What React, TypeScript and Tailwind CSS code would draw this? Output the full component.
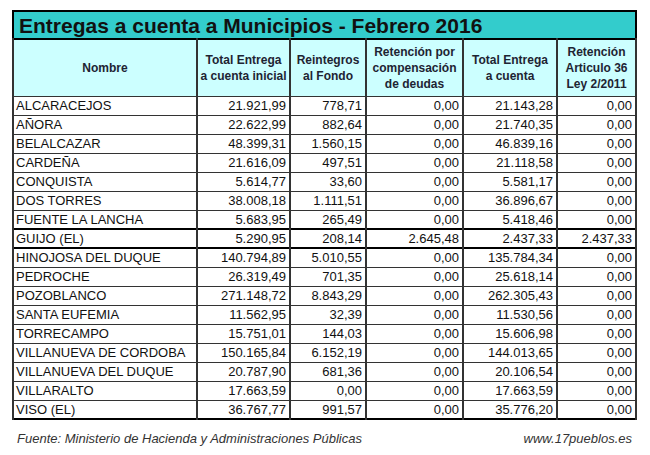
const rows: [string, string, string, string, string, string][] = [
  ['ALCARACEJOS', '21.921,99', '778,71', '0,00', '21.143,28', '0,00'],
  ['AÑORA', '22.622,99', '882,64', '0,00', '21.740,35', '0,00'],
  ['BELALCAZAR', '48.399,31', '1.560,15', '0,00', '46.839,16', '0,00'],
  ['CARDEÑA', '21.616,09', '497,51', '0,00', '21.118,58', '0,00'],
  ['CONQUISTA', '5.614,77', '33,60', '0,00', '5.581,17', '0,00'],
  ['DOS TORRES', '38.008,18', '1.111,51', '0,00', '36.896,67', '0,00'],
  ['FUENTE LA LANCHA', '5.683,95', '265,49', '0,00', '5.418,46', '0,00'],
  ['GUIJO (EL)', '5.290,95', '208,14', '2.645,48', '2.437,33', '2.437,33'],
  ['HINOJOSA DEL DUQUE', '140.794,89', '5.010,55', '0,00', '135.784,34', '0,00'],
  ['PEDROCHE', '26.319,49', '701,35', '0,00', '25.618,14', '0,00'],
  ['POZOBLANCO', '271.148,72', '8.843,29', '0,00', '262.305,43', '0,00'],
  ['SANTA EUFEMIA', '11.562,95', '32,39', '0,00', '11.530,56', '0,00'],
  ['TORRECAMPO', '15.751,01', '144,03', '0,00', '15.606,98', '0,00'],
  ['VILLANUEVA DE CORDOBA', '150.165,84', '6.152,19', '0,00', '144.013,65', '0,00'],
  ['VILLANUEVA DEL DUQUE', '20.787,90', '681,36', '0,00', '20.106,54', '0,00'],
  ['VILLARALTO', '17.663,59', '0,00', '0,00', '17.663,59', '0,00'],
  ['VISO (EL)', '36.767,77', '991,57', '0,00', '35.776,20', '0,00'],
];

const headers = [
  ['Nombre'],
  ['Total Entrega', 'a cuenta inicial'],
  ['Reintegros', 'al Fondo'],
  ['Retención por', 'compensación', 'de deudas'],
  ['Total Entrega', 'a cuenta'],
  ['Retención', 'Articulo 36', 'Ley 2/2011'],
];

const widths = ['w-[184px]', 'w-[93px]', 'w-[76px]', 'w-[97px]', 'w-[94px]', 'w-[79px]'];

export default function App() {
  return (
    <div className="w-[650px] h-[455px] bg-white pt-[10px] pl-[12px] font-['Liberation_Sans',Arial,sans-serif]">
      <table className="w-[624px] table-fixed border-collapse border-2 border-black">
        <colgroup>
          {widths.map((w, i) => (
            <col key={i} className={w} />
          ))}
        </colgroup>
        <thead>
          <tr className="h-[28px] bg-[#33cccc] border-b-2 border-black">
            <th colSpan={6} className="text-left pl-[5px] text-[21px] font-bold leading-none text-[#111]">
              Entregas a cuenta a Municipios - Febrero 2016
            </th>
          </tr>
          <tr className="h-[57px] bg-[#ccffff]">
            {headers.map((h, i) => (
              <th
                key={i}
                className="border-x-2 border-[#333] text-center align-middle text-[12px] font-bold leading-[16px] text-[#1e2433]"
              >
                {h.map((l) => (
                  <div key={l}>{l}</div>
                ))}
              </th>
            ))}
          </tr>
        </thead>
        <tbody>
          {rows.map((r) => {
            const hl = r[0] === 'GUIJO (EL)';
            return (
              <tr
                key={r[0]}
                className={hl ? 'h-[19px] border-y-2 border-black' : 'h-[19px] border-t border-[#333]'}
              >
                {r.map((c, i) => (
                  <td
                    key={i}
                    className={
                      'border-x-2 border-[#333] text-[13px] leading-[17px] text-[#111] whitespace-nowrap ' +
                      (i === 0 ? 'text-left pl-[2px]' : 'text-right pr-[3px]')
                    }
                  >
                    {c}
                  </td>
                ))}
              </tr>
            );
          })}
        </tbody>
      </table>
      <div className="flex justify-between w-[620px] pl-[5px] mt-[9px] italic text-[13px] text-[#333]">
        <span>Fuente: Ministerio de Hacienda y Administraciones Públicas</span>
        <span>www.17pueblos.es</span>
      </div>
    </div>
  );
}
